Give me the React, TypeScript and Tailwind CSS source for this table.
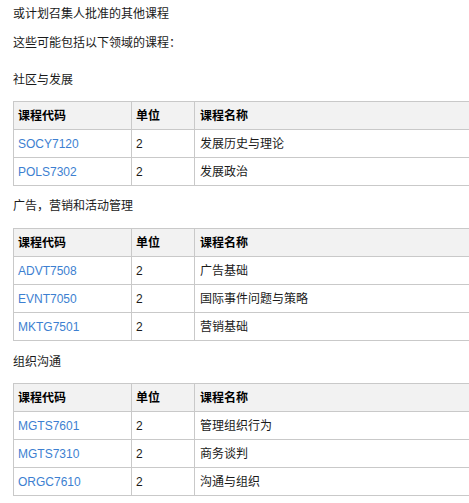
// Course list: intro lines, then one bordered table per study area.
// The tables run past the right edge of the window, as in the page.

type Course = { code: string; units: number; name: string };

const AREAS: { title: string; courses: Course[] }[] = [
  {
    title: "社区与发展",
    courses: [
      { code: "SOCY7120", units: 2, name: "发展历史与理论" },
      { code: "POLS7302", units: 2, name: "发展政治" },
    ],
  },
  {
    title: "广告，营销和活动管理",
    courses: [
      { code: "ADVT7508", units: 2, name: "广告基础" },
      { code: "EVNT7050", units: 2, name: "国际事件问题与策略" },
      { code: "MKTG7501", units: 2, name: "营销基础" },
    ],
  },
  {
    title: "组织沟通",
    courses: [
      { code: "MGTS7601", units: 2, name: "管理组织行为" },
      { code: "MGTS7310", units: 2, name: "商务谈判" },
      { code: "ORGC7610", units: 2, name: "沟通与组织" },
    ],
  },
];

// spacing above each section heading / above each table, measured off the page
const HEAD_GAP = ["mt-[19px]", "mt-[11px]", "mt-[12px]"];
const TABLE_GAP = ["mt-[12px]", "mt-[13px]", "mt-[12px]"];

function Row({
  head,
  code,
  units,
  name,
}: {
  head?: boolean;
  code: string;
  units: string;
  name: string;
}) {
  return (
    <div
      className={`flex h-[28px] border-b border-[#c9c9c9] ${
        head ? "bg-[#f2f2f2] font-bold text-black" : "bg-white"
      }`}
    >
      <div
        className={`flex w-[118px] shrink-0 items-center border-r border-[#c9c9c9] pl-1 ${
          head ? "" : "text-[#3d7fd1]"
        }`}
      >
        {code}
      </div>
      <div className="flex w-[63px] shrink-0 items-center border-r border-[#c9c9c9] pl-1">
        {units}
      </div>
      <div className="flex flex-1 items-center pl-[5px]">{name}</div>
    </div>
  );
}

export default function App() {
  return (
    <div
      className="h-[503px] w-[469px] overflow-hidden bg-white pl-[13px] pt-[5px] text-[12px] leading-[18px] text-[#1a1a1a]"
      style={{ fontFamily: '"Liberation Sans", Arial, "Noto Sans CJK SC", sans-serif' }}
    >
      <p>或计划召集人批准的其他课程</p>
      <p className="mt-[11px]">这些可能包括以下领域的课程：</p>

      {AREAS.map((area, i) => (
        <section key={area.title} className={HEAD_GAP[i]}>
          <p>{area.title}</p>
          <div className={`${TABLE_GAP[i]} w-[540px] border-l border-t border-[#c9c9c9]`}>
            <Row head code="课程代码" units="单位" name="课程名称" />
            {area.courses.map((c) => (
              <Row key={c.code} code={c.code} units={String(c.units)} name={c.name} />
            ))}
          </div>
        </section>
      ))}
    </div>
  );
}
